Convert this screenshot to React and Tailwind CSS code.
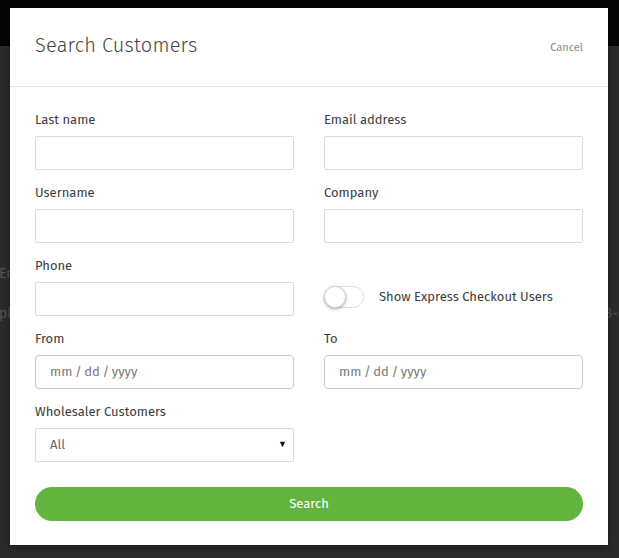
import React from "react";

const font = { fontFamily: '"Fira Sans", "Open Sans", "Noto Sans", sans-serif' };

function Field({ label, children }) {
  return (
    <div className="flex flex-col">
      <label className="text-[13px] leading-[17px] text-[#3c3c3c] mb-[8px]">{label}</label>
      {children}
    </div>
  );
}

function TextInput() {
  return <input className="h-[34px] w-full border border-[#dcdcdc] rounded-[2px] bg-white px-3 outline-none" />;
}

function DateInput() {
  return (
    <div className="h-[34px] w-full border border-[#c8c8c8] rounded-[4px] bg-white flex items-center pl-[14px] text-[13px] text-[#777]">
      {"mm\u2009/\u2009dd\u2009/\u2009yyyy"}
    </div>
  );
}

export default function App() {
  return (
    <div className="relative w-full h-[558px] overflow-hidden bg-[#2a2a2a]" style={font}>
      <div className="h-[46px] bg-[#050505]" />
      <div className="flex flex-col pt-[217px] gap-[19px] text-[14px] text-[#555]">
        <div className="flex justify-between"><span className="-ml-[1px]">Email</span><span></span></div>
        <div className="flex justify-between"><span className="-ml-[1px]">phone</span><span className="mr-[1px]">3-</span></div>
      </div>
      <div className="absolute left-[10px] top-[8px] w-[598px] h-[537px] bg-white shadow-[0_2px_6px_rgba(0,0,0,0.4)]">
        <div className="h-[79px] flex items-center justify-between px-[25px] border-b border-[#e6e6e6]">
          <h1 className="text-[20px] font-light text-[#444] tracking-[0.2px] mb-[4px]">Search Customers</h1>
          <button className="text-[11px] text-[#888] mt-[2px]">Cancel</button>
        </div>
        <div className="px-[25px] pt-[24px]">
          <div className="grid grid-cols-2 gap-x-[30px] gap-y-[14px]">
            <Field label="Last name"><TextInput /></Field>
            <Field label="Email address"><TextInput /></Field>
            <Field label="Username"><TextInput /></Field>
            <Field label="Company"><TextInput /></Field>
            <Field label="Phone"><TextInput /></Field>
            <div className="flex items-end pb-[8px]">
              <div className="flex items-center gap-[15px]">
                <div className="relative w-[40px] h-[22px] rounded-full border border-[#e0e0e0] bg-white">
                  <div className="absolute left-[-1px] top-[-1px] w-[22px] h-[22px] rounded-full bg-white border border-[#d8d8d8] shadow-[0_1px_3px_rgba(0,0,0,0.35)]" />
                </div>
                <span className="text-[13px] text-[#3c3c3c]">Show Express Checkout Users</span>
              </div>
            </div>
            <Field label="From"><DateInput /></Field>
            <Field label="To"><DateInput /></Field>
            <Field label="Wholesaler Customers">
              <div className="h-[34px] w-full border border-[#dcdcdc] rounded-[2px] bg-white flex items-center justify-between pl-[14px] pr-[6px] text-[13px] text-[#666]">
                <span>All</span>
                <span className="text-[9px] text-[#111]">▼</span>
              </div>
            </Field>
          </div>
          <button className="mt-[25px] w-full h-[34px] rounded-full bg-[#63b33f] text-white text-[13px] font-normal">
            Search
          </button>
        </div>
      </div>
    </div>
  );
}
